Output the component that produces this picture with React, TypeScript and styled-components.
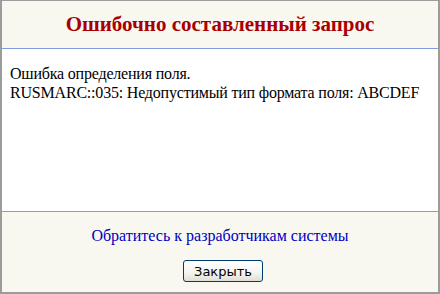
import React from 'react'
import styled, { createGlobalStyle } from 'styled-components'

const GlobalStyle = createGlobalStyle`
  html, body {
    margin: 0;
    padding: 0;
    background: #ffffff;
  }
  * {
    box-sizing: border-box;
  }
`

const Dialog = styled.div`
  width: 440px;
  height: 294px;
  display: flex;
  flex-direction: column;
  border: 2px solid #9c9c9c;
  border-top-width: 1px;
  font-family: 'Liberation Serif', serif;
  background: #ffffff;
`

const Header = styled.div`
  height: 48px;
  flex: none;
  display: flex;
  align-items: center;
  justify-content: center;
  background: #f8f8f0;
  border-bottom: 1px solid #7f9ce0;
`

const Title = styled.h1`
  margin: 0;
  font-size: 21px;
  font-weight: bold;
  color: #a80000;
`

const Body = styled.div`
  height: 163px;
  flex: none;
  padding: 15px 8px;
  font-size: 16px;
  line-height: 19px;
  letter-spacing: -0.2px;
  white-space: nowrap;
  color: #000000;
  border-bottom: 1px solid #7f9ce0;
`

const Footer = styled.div`
  flex: 1;
  display: flex;
  flex-direction: column;
  align-items: center;
  padding-top: 15px;
  gap: 15px;
  background: #f8f8f0;
`

const Note = styled.div`
  font-size: 16px;
  color: #0000c0;
`

const Button = styled.button`
  width: 80px;
  height: 22px;
  margin-left: 6px;
  padding: 0;
  border: 1px solid #003c74;
  border-radius: 3px;
  background: linear-gradient(#ffffff, #f4f4f0 60%, #e0ded4);
  font-family: 'DejaVu Sans', sans-serif;
  font-size: 13px;
  color: #000000;
`

const errors = [
  'Ошибка определения поля.',
  'RUSMARC::035: Недопустимый тип формата поля: ABCDEF',
]

export default function App() {
  return (
    <>
      <GlobalStyle />
      <Dialog>
        <Header>
          <Title>Ошибочно составленный запрос</Title>
        </Header>
        <Body>
          {errors.map(line => (
            <div key={line}>{line}</div>
          ))}
        </Body>
        <Footer>
          <Note>Обратитесь к разработчикам системы</Note>
          <Button>Закрыть</Button>
        </Footer>
      </Dialog>
    </>
  )
}
